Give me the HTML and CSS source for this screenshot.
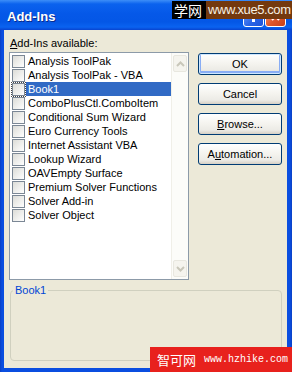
FILE: index.html
```html
<!DOCTYPE html>
<html lang="en">

<head>
    <meta charset="UTF-8">
    <meta name="viewport" content="width=device-width, initial-scale=1.0">
    <title>Add-Ins</title>
    <link rel="stylesheet" href="styles.css">
</head>

<body>
    <div class="window">
        <div class="titlebar">
            <div class="title">Add-Ins</div>
            <div class="tb-btns">
                <div class="tb-btn help"><span class="help-dot"></span></div>
                <div class="tb-btn close">
                    <svg width="11" height="11" viewBox="0 0 11 11">
                        <path d="M2 2 L9 9 M9 2 L2 9" stroke="#fff" stroke-width="2" />
                    </svg>
                </div>
            </div>
        </div>

        <div class="client">
            <div class="label"><u>A</u>dd-Ins available:</div>
            <div class="main">
                <div class="list">
                    <ul class="items">
                        <li class="item"><span class="check"></span><span class="name">Analysis ToolPak</span></li>
                        <li class="item"><span class="check"></span><span class="name">Analysis ToolPak - VBA</span></li>
                        <li class="item sel"><span class="check"></span><span class="name">Book1</span></li>
                        <li class="item"><span class="check"></span><span class="name">ComboPlusCtl.ComboItem</span></li>
                        <li class="item"><span class="check"></span><span class="name">Conditional Sum Wizard</span></li>
                        <li class="item"><span class="check"></span><span class="name">Euro Currency Tools</span></li>
                        <li class="item"><span class="check"></span><span class="name">Internet Assistant VBA</span></li>
                        <li class="item"><span class="check"></span><span class="name">Lookup Wizard</span></li>
                        <li class="item"><span class="check"></span><span class="name">OAVEmpty Surface</span></li>
                        <li class="item"><span class="check"></span><span class="name">Premium Solver Functions</span></li>
                        <li class="item"><span class="check"></span><span class="name">Solver Add-in</span></li>
                        <li class="item"><span class="check"></span><span class="name">Solver Object</span></li>
                    </ul>
                    <div class="scroll">
                        <div class="sb-btn">
                            <svg width="9" height="6" viewBox="0 0 9 6">
                                <path d="M1 5 L4.5 1.5 L8 5" fill="none" stroke="#c9c7ba" stroke-width="2" />
                            </svg>
                        </div>
                        <div class="sb-track"></div>
                        <div class="sb-btn">
                            <svg width="9" height="6" viewBox="0 0 9 6">
                                <path d="M1 1 L4.5 4.5 L8 1" fill="none" stroke="#c9c7ba" stroke-width="2" />
                            </svg>
                        </div>
                    </div>
                </div>
                <div class="buttons">
                    <button class="btn default" type="button">OK</button>
                    <button class="btn" type="button">Cancel</button>
                    <button class="btn" type="button"><u>B</u>rowse...</button>
                    <button class="btn" type="button">A<u>u</u>tomation...</button>
                </div>
            </div>
            <fieldset class="group">
                <legend>Book1</legend>
            </fieldset>
        </div>

        <div class="mark-top">
            <span class="mark-cn">学网</span><span class="mark-url">www.xue5.com</span>
        </div>
        <div class="mark-bottom">
            <span class="mark-cn2">智可网</span><span class="mark-url2">www.hzhike.com</span>
        </div>
    </div>
</body>

</html>
```

FILE: styles.css
```css
* {
    box-sizing: border-box;
}

body {
    margin: 0;
    font-family: "Liberation Sans", Arial, sans-serif;
    font-size: 11px;
    color: #000;
}

.window {
    position: relative;
    width: 292px;
    height: 372px;
    display: flex;
    flex-direction: column;
    background: linear-gradient(to right, #0a3fc4, #0a4ee0 2px, #0a4ee0 calc(100% - 2px), #0a3fc4);
    overflow: hidden;
}

.titlebar {
    height: 30px;
    display: flex;
    align-items: center;
    padding: 0 6px 0 7px;
    color: #fff;
    background: linear-gradient(to bottom, #3d8ef8 0, #0b62ee 4px, #0558e8 14px, #0457e6 22px, #0a63f0 27px, #0844d0 30px);
}

.title {
    margin-top: 3px;
    font-size: 13px;
    font-weight: bold;
    text-shadow: 1px 1px #0a2a8c;
}

.tb-btns {
    display: flex;
    gap: 1px;
    margin-top: 3px;
    margin-left: auto;
}

.tb-btn {
    width: 21px;
    height: 21px;
    border: 1px solid #fff;
    border-radius: 3px;
    display: flex;
    align-items: center;
    justify-content: center;
}

.help {
    align-items: flex-end;
    padding-bottom: 4px;
    background: linear-gradient(135deg, #6ea3ff, #2a64e6 60%, #1d52d8);
}

.help-dot {
    width: 3px;
    height: 3px;
    background: #fff;
}

.close {
    background: linear-gradient(135deg, #f0a080, #e0572a 55%, #c8401a);
}

.client {
    flex: 1;
    display: flex;
    flex-direction: column;
    margin: 0 5px 4px 4px;
    padding: 6px 5px 7px 5px;
    background: #ece9d8;
}

.label {
    height: 14px;
    line-height: 14px;
    margin: 0 0 2px 1px;
}

.main {
    display: flex;
    height: 228px;
}

.list {
    width: 180px;
    display: flex;
    border: 1px solid #8c9aa8;
    background: #fff;
}

.items {
    flex: 1;
    list-style: none;
    margin: 0;
    padding: 1px 0 0 0;
}

.item {
    display: flex;
    align-items: center;
    height: 14px;
    padding-left: 2px;
}

.check {
    width: 13px;
    height: 13px;
    margin-right: 1px;
    border: 1px solid #7b8795;
    background: linear-gradient(135deg, #dcdcd7, #fff);
}

.name {
    flex: 1;
    height: 14px;
    line-height: 14px;
    padding: 0 2px;
    white-space: nowrap;
}

.item.sel .check {
    outline: 1px dotted #444;
}

.item.sel .name {
    background: #316ac5;
    color: #fff;
}

.scroll {
    width: 17px;
    display: flex;
    flex-direction: column;
    background: #fcfcf9;
    border-left: 1px solid #f0efe8;
}

.sb-btn {
    height: 17px;
    margin: 2px 1px;
    display: flex;
    align-items: center;
    justify-content: center;
    border: 1px solid #e8e7df;
    border-radius: 2px;
    background: #f5f4ee;
}

.sb-track {
    flex: 1;
}

.buttons {
    width: 84px;
    margin-left: 9px;
    padding-top: 1px;
    display: flex;
    flex-direction: column;
    gap: 8px;
}

.btn {
    height: 22px;
    padding: 0;
    border: 1px solid #003c74;
    border-radius: 3px;
    background: linear-gradient(to bottom, #fff 0, #f4f3ee 50%, #ecebe6 80%, #d6d0c5 100%);
    font-family: "Liberation Sans", Arial, sans-serif;
    font-size: 11px;
    color: #000;
}

.btn.default {
    box-shadow: inset 0 0 0 1px #cee7ff, inset 0 -1px 0 2px #89adf4;
}

.group {
    flex: 1;
    margin: 3px 0 0 1px;
    padding: 0;
    border: 1px solid #d0d0bf;
    border-radius: 4px;
}

.group legend {
    margin-left: 2px;
    padding: 0 2px;
    line-height: 14px;
    color: #0046d5;
}

.mark-top {
    position: absolute;
    top: 1px;
    left: 172px;
    display: flex;
    height: 18px;
    line-height: 18px;
}

.mark-cn {
    width: 34px;
    padding-left: 2px;
    background: #000;
    color: #fff;
    font-family: "Noto Sans CJK SC", sans-serif;
    font-size: 14px;
}

.mark-url {
    width: 86px;
    padding-left: 2px;
    background: #74390e;
    color: #f4efe2;
    font-size: 13px;
    letter-spacing: -0.4px;
}

.mark-bottom {
    position: absolute;
    left: 150px;
    bottom: 0;
    width: 142px;
    height: 25px;
    display: flex;
    align-items: center;
    padding-left: 7px;
    background: #e8211d;
    color: #fff;
}

.mark-cn2 {
    font-family: "Noto Sans CJK SC", sans-serif;
    font-size: 13px;
    margin-right: 8px;
}

.mark-url2 {
    font-family: "Liberation Mono", monospace;
    font-size: 10px;
}
```
